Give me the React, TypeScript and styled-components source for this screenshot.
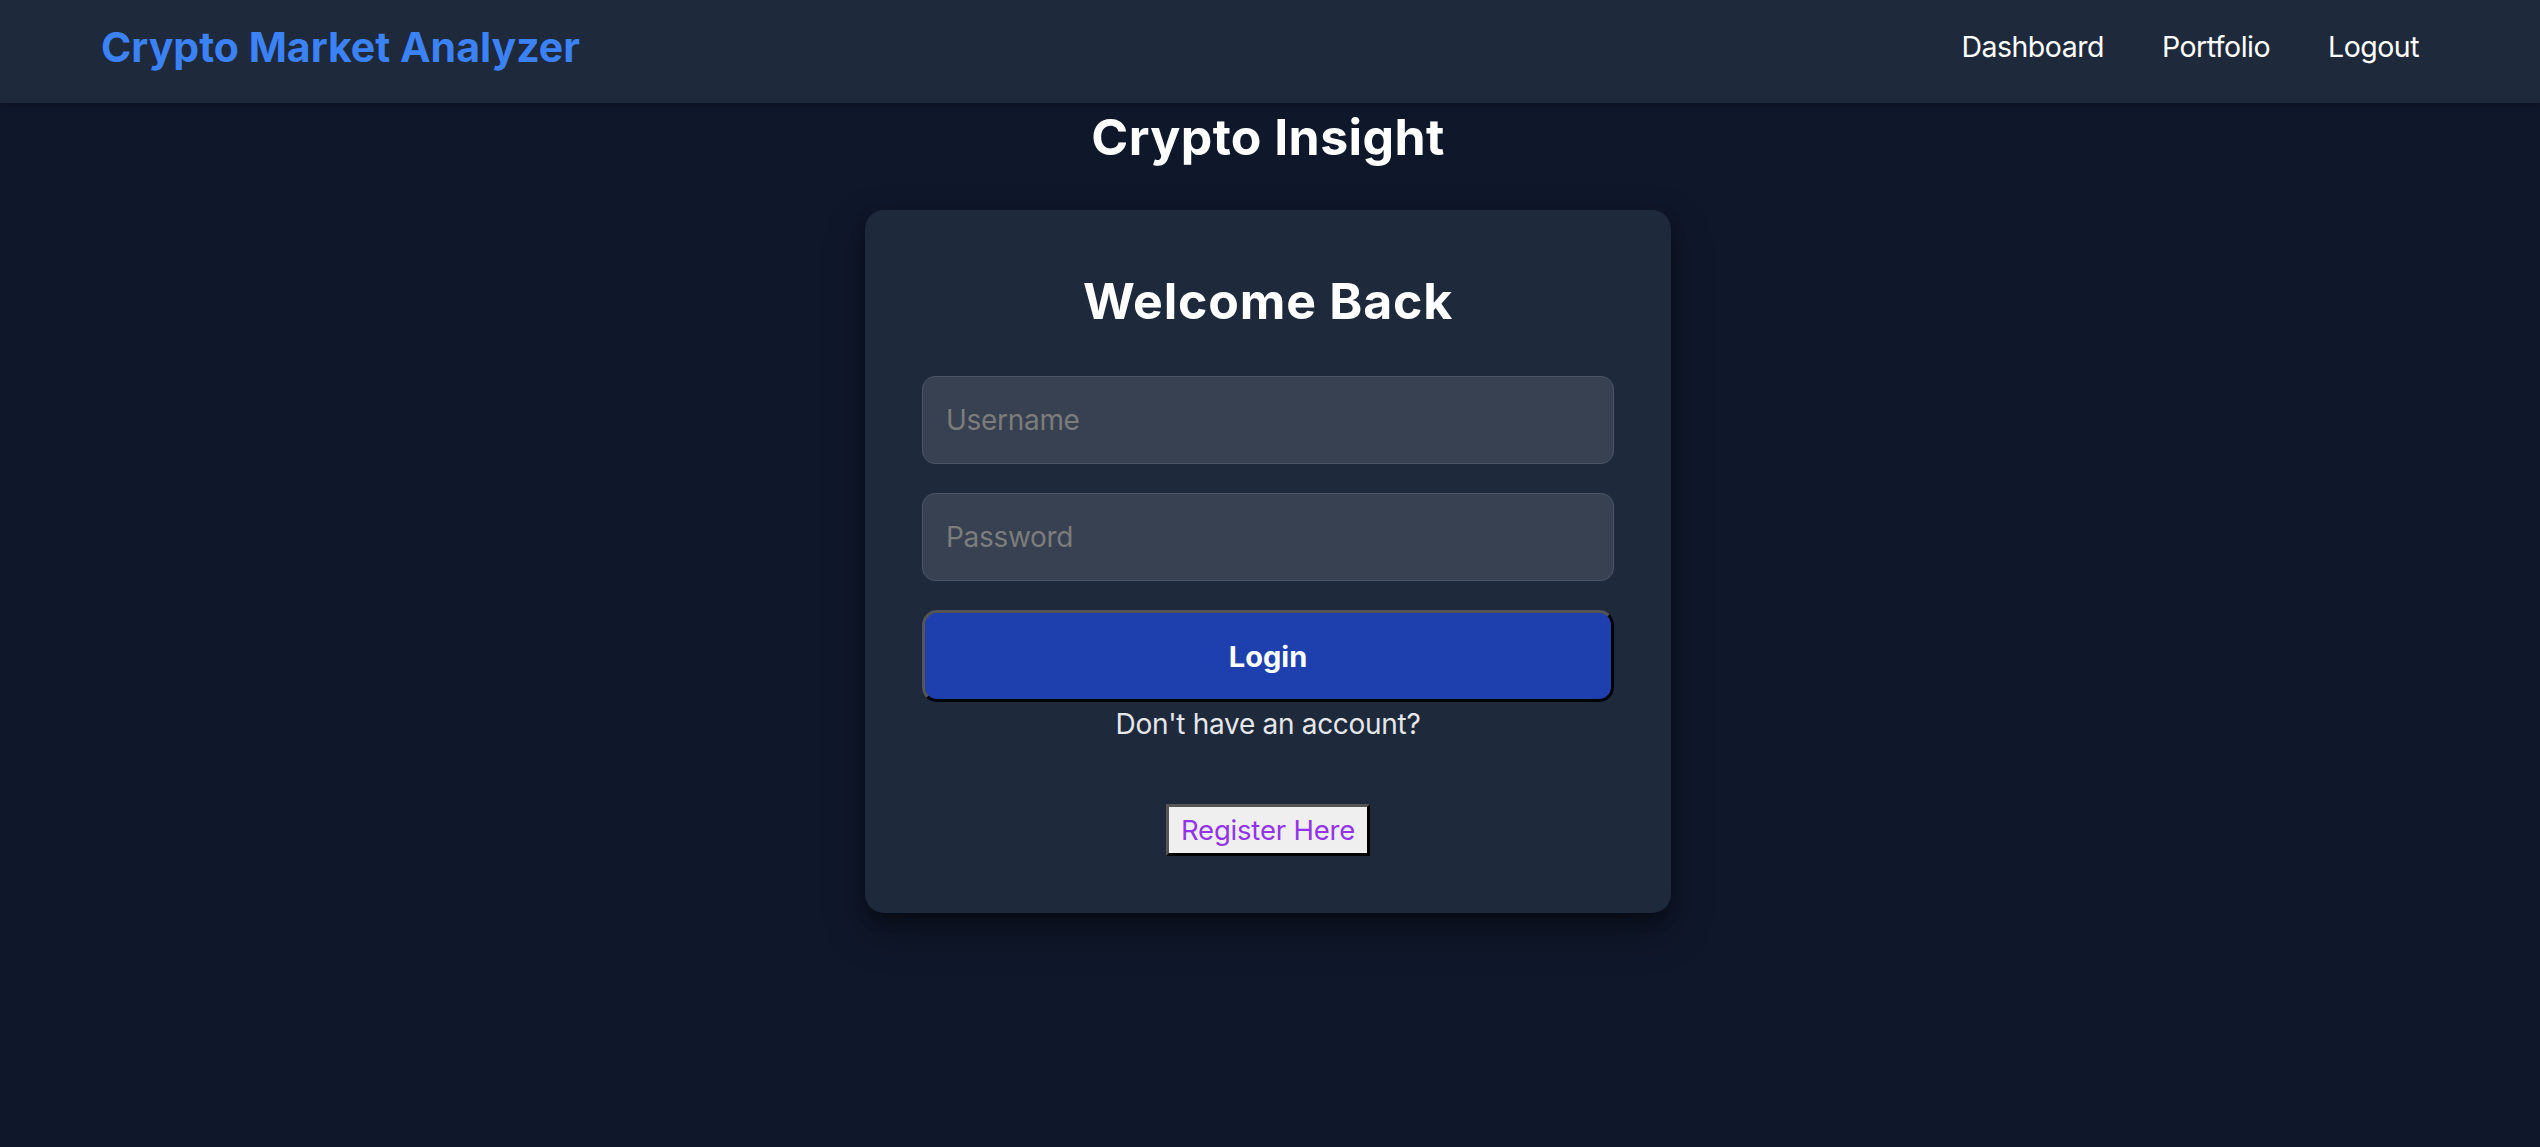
import React from "react";
import styled, { createGlobalStyle } from "styled-components";

const GlobalStyle = createGlobalStyle`
  html, body {
    margin: 0;
    padding: 0;
    background: #0f172a;
    font-family: Inter, "Noto Sans", "Liberation Sans", sans-serif;
    min-height: 100%;
  }
  * { box-sizing: border-box; }
`;

const Page = styled.div`
  min-height: 1147px;
  background: #0f172a;
  display: flex;
  flex-direction: column;
`;

const NavBar = styled.nav`
  height: 103px;
  background: #1e293b;
  display: flex;
  align-items: center;
  justify-content: space-between;
  padding: 0 121px 10px 101px;
  box-shadow: 0 2px 6px rgba(0, 0, 0, 0.25);
`;

const Brand = styled.div`
  color: #3b82f6;
  font-weight: 700;
  font-size: 41px;
  letter-spacing: 0;
`;

const NavLinks = styled.div`
  display: flex;
  align-items: center;
  gap: 58px;
`;

const NavLink = styled.a`
  color: #ffffff;
  font-size: 28.5px;
  letter-spacing: -0.5px;
  text-decoration: none;
  cursor: pointer;
`;

const Main = styled.main`
  display: flex;
  flex-direction: column;
  align-items: center;
  padding-top: 5px;
  padding-right: 4px;
`;

const PageTitle = styled.h1`
  margin: 0 0 44px;
  color: #ffffff;
  font-size: 50px;
  line-height: 58px;
  font-weight: 700;
  letter-spacing: 0.4px;
`;

const Card = styled.div`
  width: 806px;
  padding: 62px 57px 57px;
  background: #1e293b;
  border-radius: 19px;
  box-shadow: 0 18px 40px rgba(0, 0, 0, 0.35), 0 6px 14px rgba(0, 0, 0, 0.25);
  display: flex;
  flex-direction: column;
`;

const CardTitle = styled.h2`
  margin: 0 0 46px;
  text-align: center;
  color: #ffffff;
  font-size: 50px;
  line-height: 58px;
  font-weight: 700;
  letter-spacing: 0.8px;
`;

const Field = styled.input`
  display: block;
  width: 100%;
  height: 88px;
  margin: 0 0 29px;
  padding: 0 23px;
  background: #374151;
  border: 1px solid #4b5563;
  border-radius: 13px;
  color: #ffffff;
  font-family: inherit;
  font-size: 28px;
  letter-spacing: -0.3px;
  outline: none;
  &::placeholder {
    color: #7c7c7c;
  }
`;

const LoginButton = styled.button`
  display: block;
  width: 100%;
  height: 92px;
  background: #1e40af;
  border-width: 3px;
  border-style: solid;
  border-color: #555555 #000000 #000000 #555555;
  border-radius: 15px;
  color: #ffffff;
  font-family: inherit;
  font-size: 29px;
  font-weight: 700;
  cursor: pointer;
`;

const Prompt = styled.p`
  margin: 0 0 57px;
  text-align: center;
  color: #e5e7eb;
  font-size: 28px;
  letter-spacing: -0.3px;
  line-height: 45px;
`;

const RegisterButton = styled.button`
  display: block;
  align-self: center;
  height: 52px;
  padding: 0 12px;
  background: #efefef;
  border-width: 3px;
  border-style: solid;
  border-color: #555555 #000000 #000000 #555555;
  border-radius: 0;
  color: #9333ea;
  font-family: inherit;
  font-size: 27.5px;
  letter-spacing: -0.2px;
  cursor: pointer;
`;

export default function App() {
  return (
    <>
      <GlobalStyle />
      <Page>
        <NavBar>
          <Brand>Crypto Market Analyzer</Brand>
          <NavLinks>
            <NavLink>Dashboard</NavLink>
            <NavLink>Portfolio</NavLink>
            <NavLink>Logout</NavLink>
          </NavLinks>
        </NavBar>
        <Main>
          <PageTitle>Crypto Insight</PageTitle>
          <Card>
            <CardTitle>Welcome Back</CardTitle>
            <Field type="text" placeholder="Username" />
            <Field type="password" placeholder="Password" />
            <LoginButton>Login</LoginButton>
            <Prompt>Don't have an account?</Prompt>
            <RegisterButton>Register Here</RegisterButton>
          </Card>
        </Main>
      </Page>
    </>
  );
}
